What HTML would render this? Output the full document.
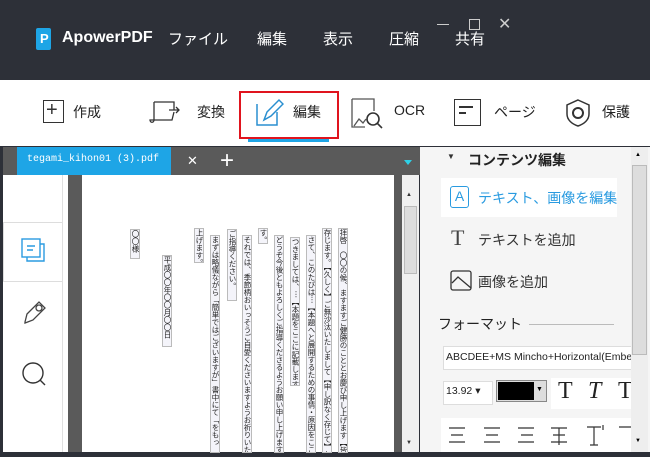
<!DOCTYPE html>
<html><head><meta charset="utf-8"><style>
*{margin:0;padding:0;box-sizing:border-box}
body{width:650px;height:457px;overflow:hidden;background:#2d3038;font-family:"Liberation Sans","Noto Sans CJK JP",sans-serif;position:relative}
.a{position:absolute}
.menu{color:#fff;font-size:15px;top:28px}
.tb{font-size:14px;color:#222;top:102px}
.v{position:absolute;writing-mode:vertical-rl;font-size:7.5px;color:#222;font-family:"Noto Sans CJK JP",sans-serif;line-height:8px;width:8px;white-space:nowrap;overflow:hidden;background:#f4f4fa;outline:1px solid #bbb}
</style></head><body>
<!-- title -->
<div class="a" style="left:36px;top:28px;width:15px;height:22px;background:#1ea5e6;border-radius:2px"></div>
<div class="a" style="left:40px;top:31px;color:#fff;font-weight:bold;font-size:13px">P</div>
<div class="a" style="left:62px;top:29px;color:#fff;font-weight:bold;font-size:16px">ApowerPDF</div>
<div class="a menu" style="left:168px">ファイル</div>
<div class="a menu" style="left:257px">編集</div>
<div class="a menu" style="left:323px">表示</div>
<div class="a menu" style="left:389px">圧縮</div>
<div class="a menu" style="left:455px">共有</div>
<div class="a" style="left:437px;top:24px;width:12px;height:1px;background:#ccc"></div>
<div class="a" style="left:469px;top:19px;width:11px;height:11px;border:1px solid #ccc"></div>
<div class="a" style="left:498px;top:14px;color:#ccc;font-size:16px">✕</div>
<!-- toolbar -->
<div class="a" style="left:0;top:80px;width:650px;height:66px;background:#fff"></div>
<div class="a" style="left:43px;top:100px;width:21px;height:23px;border:1.5px solid #333"></div>
<div class="a" style="left:46px;top:99px;font-size:20px;color:#333">+</div>
<div class="a tb" style="left:73px">作成</div>
<svg class="a" style="left:148px;top:98px" width="36" height="30"><path d="M6 4h20v8M6 4v18c0 3-4 3-4 0h16M10 22h14l2-8M21 12h10M28 9l3 3-3 3" fill="none" stroke="#333" stroke-width="1.3"/></svg>
<div class="a tb" style="left:197px">変換</div>
<div class="a" style="left:239px;top:91px;width:100px;height:48px;border:2px solid #e0141e"></div>
<div class="a" style="left:248px;top:139px;width:81px;height:3px;background:#1ea5e6"></div>
<svg class="a" style="left:254px;top:98px" width="30" height="30"><path d="M3 6v21h20V14M10 22l3-8 12-12 4 4-12 12z" fill="none" stroke="#2a8fd0" stroke-width="1.5"/></svg>
<div class="a tb" style="left:293px">編集</div>
<svg class="a" style="left:350px;top:98px" width="36" height="32"><path d="M2 1h22v12M2 1v28h13M4 28l5-7 4 4 3-4" fill="none" stroke="#555" stroke-width="1.3"/><circle cx="23" cy="21" r="6" fill="none" stroke="#333" stroke-width="1.6"/><path d="M27 25l5 5" stroke="#333" stroke-width="1.6"/></svg>
<div class="a tb" style="left:394px">OCR</div>
<div class="a" style="left:454px;top:99px;width:27px;height:27px;border:1.5px solid #333"></div>
<div class="a" style="left:459px;top:106px;width:14px;height:1.5px;background:#333"></div>
<div class="a" style="left:459px;top:112px;width:7px;height:1.5px;background:#333"></div>
<div class="a tb" style="left:494px">ページ</div>
<svg class="a" style="left:564px;top:98px" width="28" height="30"><path d="M14 2l11 5v9c0 6-5 10-11 12C8 26 3 22 3 16V7z" fill="none" stroke="#333" stroke-width="1.5"/><circle cx="14" cy="15" r="5" fill="none" stroke="#333" stroke-width="2"/></svg>
<div class="a tb" style="left:602px">保護</div>
<!-- tab bar -->
<div class="a" style="left:3px;top:147px;width:417px;height:28px;background:#5a5a5a"></div>
<div class="a" style="left:17px;top:147px;width:154px;height:28px;background:#1ea5e6"></div>
<div class="a" style="left:27px;top:154px;color:#fff;font-size:10px;font-family:'Liberation Mono',monospace">tegami_kihon01 (3).pdf</div>
<div class="a" style="left:187px;top:153px;color:#fff;font-size:13px">✕</div>
<div class="a" style="left:220px;top:147px;color:#fff;font-size:24px">+</div>
<div class="a" style="left:404px;top:160px;width:0;height:0;border-left:4px solid transparent;border-right:4px solid transparent;border-top:5px solid #2ed0e6"></div>
<!-- left side -->
<div class="a" style="left:3px;top:175px;width:65px;height:277px;background:#fff"></div>
<div class="a" style="left:3px;top:222px;width:60px;height:60px;border-top:1px solid #ddd;border-bottom:1px solid #ddd;border-left:1px solid #ddd;background:#fff"></div>
<div class="a" style="left:62px;top:175px;width:1px;height:277px;background:#e0e0e0"></div>
<svg class="a" style="left:21px;top:238px" width="28" height="28"><rect x="1" y="1" width="18" height="18" fill="#fff" stroke="#2a9be0" stroke-width="1.4"/><path d="M19 6h4v17H6v-4" fill="none" stroke="#2a9be0" stroke-width="1.4"/><path d="M6 8h8M6 12h6" stroke="#2a9be0" stroke-width="1.4"/></svg>
<svg class="a" style="left:21px;top:300px" width="28" height="30"><path d="M4 22l2-8 12-12 6 6-12 12-8 3z" fill="none" stroke="#444" stroke-width="1.3"/><circle cx="18" cy="8" r="3" fill="none" stroke="#444" stroke-width="1.3"/></svg>
<svg class="a" style="left:21px;top:361px" width="28" height="28"><circle cx="12" cy="12" r="10" fill="none" stroke="#333" stroke-width="1.4"/><path d="M19 19l5 5" stroke="#333" stroke-width="1.4"/></svg>
<div class="a" style="left:68px;top:175px;width:334px;height:277px;background:#5a5a5a"></div>
<div class="a" style="left:82px;top:175px;width:312px;height:277px;background:#fff"></div>
<div class="a" style="left:402px;top:175px;width:17px;height:277px;background:#f0f0f0"></div>
<div class="a" style="left:404px;top:206px;width:13px;height:68px;background:#ddd;border:1px solid #bbb"></div>
<div class="a" style="left:406px;top:192px;font-size:6px;color:#333">▲</div>
<div class="a" style="left:406px;top:440px;font-size:6px;color:#333">▼</div>
<!-- vertical text -->
<div class="v" style="left:131px;top:230px;height:28px">〇〇様</div>
<div class="v" style="left:163px;top:256px;height:90px">平成〇〇年〇〇月〇〇日</div>
<div class="v" style="left:195px;top:229px;height:33px">上げます。</div>
<div class="v" style="left:211px;top:236px;height:216px">まずは略儀ながら「簡単ではございますが」書中にて「をもっ</div>
<div class="v" style="left:228px;top:230px;height:70px">ご指導ください。</div>
<div class="v" style="left:243px;top:236px;height:216px">それでは、季節柄おいっそうご自愛くださいますようお祈りいた</div>
<div class="v" style="left:259px;top:229px;height:14px">す。</div>
<div class="v" style="left:275px;top:236px;height:216px">どうぞ今後ともよろしくご指導くださるようお願い申し上げます</div>
<div class="v" style="left:291px;top:238px;height:147px">つきましては、…【本題をここに記載します】</div>
<div class="v" style="left:307px;top:236px;height:216px">さて、このたびは…【本題へと展開するための事情・原因をここに</div>
<div class="v" style="left:323px;top:229px;height:223px">存じます。【久しく】ご無沙汰いたしまして【申し訳なく存じて】おり</div>
<div class="v" style="left:339px;top:229px;height:223px">拝啓　〇〇の候、ますますご健勝のこととお慶び申し上げます【皆様</div>
<!-- right panel -->
<div class="a" style="left:420px;top:147px;width:230px;height:305px;background:#f5f5f5"></div>
<div class="a" style="left:447px;top:152px;font-size:8px;color:#333">▼</div>
<div class="a" style="left:468px;top:150px;font-size:14px;font-weight:bold;color:#222">コンテンツ編集</div>
<div class="a" style="left:441px;top:178px;width:176px;height:39px;background:#fff"></div>
<div class="a" style="left:450px;top:186px;width:19px;height:22px;border:1.5px solid #2a9be0;border-radius:3px;color:#2a9be0;font-size:14px;text-align:center;line-height:19px">A</div>
<div class="a" style="left:478px;top:188px;font-size:14px;color:#2a9be0">テキスト、画像を編集</div>
<div class="a" style="left:451px;top:225px;font-size:22px;color:#444;font-family:'Liberation Serif',serif">T</div>
<div class="a" style="left:478px;top:230px;font-size:14px;color:#333">テキストを追加</div>
<svg class="a" style="left:450px;top:270px" width="22" height="22"><rect x="1" y="1" width="20" height="19" rx="2" fill="none" stroke="#333" stroke-width="1.3"/><path d="M2 13l6-6 13 11" fill="none" stroke="#333" stroke-width="1.3"/></svg>
<div class="a" style="left:478px;top:272px;font-size:14px;color:#333">画像を追加</div>
<div class="a" style="left:438px;top:314px;font-size:14px;color:#222">フォーマット</div>
<div class="a" style="left:529px;top:324px;width:85px;height:1px;background:#bbb"></div>
<div class="a" style="left:443px;top:346px;width:190px;height:24px;background:#fff;border:1px solid #ddd"></div>
<div class="a" style="left:446px;top:351px;font-size:10.5px;color:#222;white-space:nowrap;width:185px;overflow:hidden">ABCDEE+MS Mincho+Horizontal(Embe</div>
<div class="a" style="left:443px;top:381px;width:50px;height:24px;background:#fff;border:1px solid #ddd"></div>
<div class="a" style="left:446px;top:385px;font-size:10.5px;color:#222">13.92 ▾</div>
<div class="a" style="left:496px;top:380px;width:51px;height:22px;background:#ddd;border:1px solid #888"></div>
<div class="a" style="left:498px;top:382px;width:36px;height:18px;background:#000"></div>
<div class="a" style="left:536px;top:386px;font-size:7px">▼</div>
<div class="a" style="left:551px;top:378px;width:80px;height:31px;background:#fff"></div>
<div class="a" style="left:558px;top:378px;font-size:24px;font-family:'Liberation Serif',serif;color:#222">T</div>
<div class="a" style="left:588px;top:378px;font-size:24px;font-family:'Liberation Serif',serif;font-style:italic;color:#222">T</div>
<div class="a" style="left:618px;top:378px;font-size:24px;font-family:'Liberation Serif',serif;color:#222">T</div>
<div class="a" style="left:441px;top:418px;width:190px;height:34px;background:#fff"></div>
<svg class="a" style="left:441px;top:418px" width="190" height="34"><g stroke="#333" stroke-width="1.2" fill="none"><path d="M8 10h16M10 17h12M8 24h16M43 10h16M45 17h12M43 24h16M77 10h16M80 17h12M77 24h16M110 10h16M112 17h12M110 24h16M118 10v17"/><path d="M146 9h14M153 9v18M149 27h8M162 7v5M178 9h12"/></g></svg>
<div class="a" style="left:631px;top:147px;width:17px;height:305px;background:#eee"></div>
<div class="a" style="left:632px;top:165px;width:15px;height:190px;background:#ddd;border:1px solid #bbb"></div>
<div class="a" style="left:635px;top:152px;font-size:6px">▲</div>
<div class="a" style="left:635px;top:438px;font-size:6px">▼</div>
</body></html>
